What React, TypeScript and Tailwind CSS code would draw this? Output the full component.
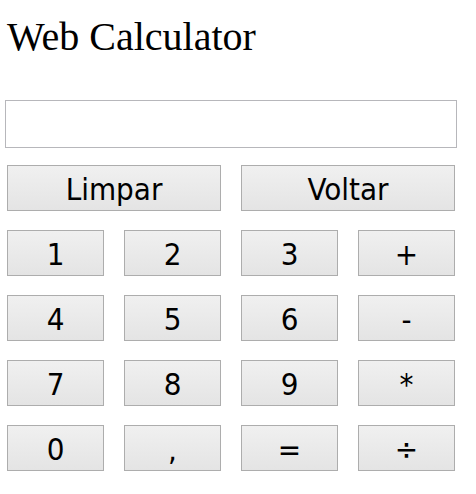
import React, { useState } from "react";

const keys = ["1", "2", "3", "+", "4", "5", "6", "-", "7", "8", "9", "*", "0", ",", "=", "÷"];

export default function App() {
  const [value, setValue] = useState("");

  const btnCls =
    "h-[46px] pt-[3px] border border-[#adadad] bg-gradient-to-b from-[#f0f0f0] to-[#e4e4e4] text-black text-[31px] leading-none font-['DejaVu_Sans_Condensed','DejaVu_Sans',sans-serif] hover:from-[#e8f3fc] hover:to-[#dbecfa]";

  const press = (k: string) => {
    if (k === "=") {
      try {
        const expr = value.replace(/,/g, ".").replace(/÷/g, "/");
        // eslint-disable-next-line no-new-func
        setValue(String(Function(`return (${expr})`)()).replace(".", ","));
      } catch {
        setValue("Erro");
      }
      return;
    }
    setValue(value + k);
  };

  return (
    <div className="min-h-screen bg-white pt-[14px]">
      <h1 className="ml-[7px] text-[40px] leading-[46px] font-['Liberation_Serif',serif] text-black">
        Web Calculator
      </h1>
      <input
        className="block ml-[5px] mt-[40px] w-[452px] h-[48px] border border-[#b7b7bb] px-2 text-[24px] outline-none font-['DejaVu_Sans',sans-serif]"
        value={value}
        onChange={(e) => setValue(e.target.value)}
      />
      <div className="ml-[7px] mt-[17px] w-[448px]">
        <div className="grid grid-cols-2 gap-x-[20px]">
          <button className={btnCls} onClick={() => setValue("")}>
            Limpar
          </button>
          <button className={btnCls} onClick={() => setValue(value.slice(0, -1))}>
            Voltar
          </button>
        </div>
        <div className="mt-[19px] grid grid-cols-4 gap-x-[20px] gap-y-[19px]">
          {keys.map((k) => (
            <button key={k} className={btnCls} onClick={() => press(k)}>
              {k}
            </button>
          ))}
        </div>
      </div>
    </div>
  );
}
